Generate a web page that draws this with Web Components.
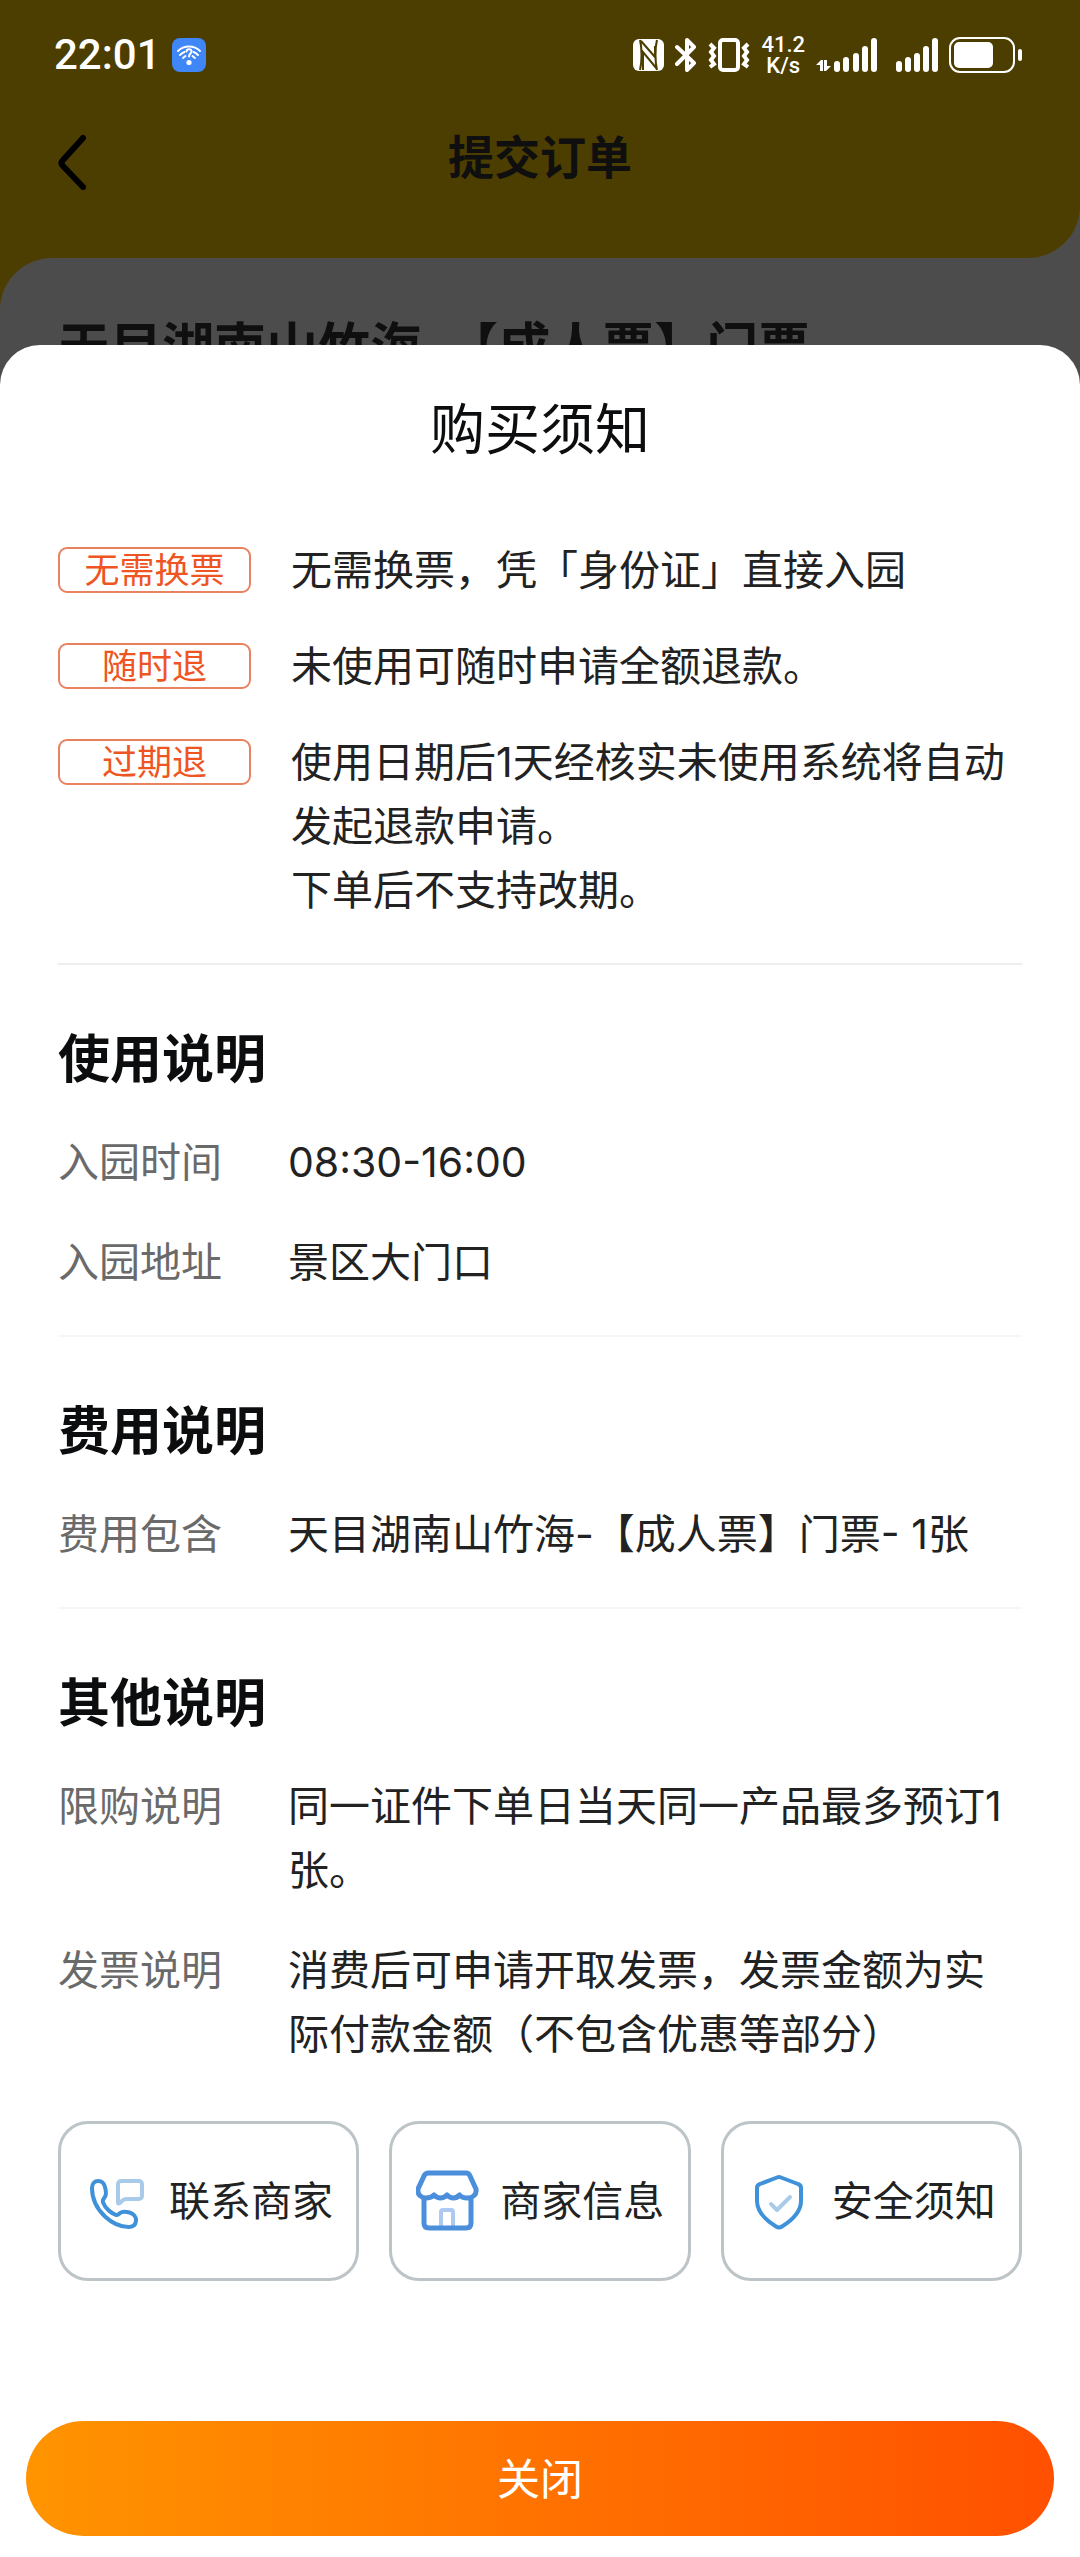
<!DOCTYPE html>
<html lang="zh-CN">
<head>
<meta charset="UTF-8">
<meta name="viewport" content="width=device-width, initial-scale=1">
<title>提交订单</title>
<style>
    html {
        --brand: #ffcc00;
        --ink: #222;
        --heading: #0b0d0e;
        --muted: #6a6a6a;
        --accent: #ee5522;
        --side: 58px;
    }

    body {
        margin: 0;
        font-family: Inter, "Noto Sans CJK SC", sans-serif;
        font-size: 41px;
        line-height: 64px;
        color: var(--ink);
        text-spacing-trim: space-all;
    }
</style>
</head>
<body>
<app-screen>
    <order-page slot="page" heading="提交订单">天目湖南山竹海-【成人票】门票</order-page>
    <status-bar slot="status" time="22:01" speed="41.2" unit="K/s"></status-bar>

    <bottom-sheet heading="购买须知">
        <notice-list>
            <notice-row tag="无需换票">无需换票，凭「身份证」直接入园</notice-row>
            <notice-row tag="随时退">未使用可随时申请全额退款。</notice-row>
            <notice-row tag="过期退">使用日期后1天经核实未使用系统将自动发起退款申请。<br>下单后不支持改期。</notice-row>
        </notice-list>

        <info-section heading="使用说明">
            <info-row label="入园时间">08:30-16:00</info-row>
            <info-row label="入园地址">景区大门口</info-row>
        </info-section>

        <info-section heading="费用说明">
            <info-row label="费用包含">天目湖南山竹海-【成人票】门票- 1张</info-row>
        </info-section>

        <info-section heading="其他说明">
            <info-row label="限购说明">同一证件下单日当天同一产品最多预订1张。</info-row>
            <info-row label="发票说明">消费后可申请开取发票，发票金额为实际付款金额（不包含优惠等部分）</info-row>
        </info-section>

        <action-group>
            <action-button icon="phone">联系商家</action-button>
            <action-button icon="store">商家信息</action-button>
            <action-button icon="shield">安全须知</action-button>
        </action-group>

        <close-button slot="footer">关闭</close-button>
    </bottom-sheet>
</app-screen>

<script>
class AppScreen extends HTMLElement {
    constructor() {
        super();
        this.attachShadow({ mode: "open" });

        this.shadowRoot.innerHTML = `
            <style>
                :host {
                    display: grid;
                    grid-template-rows: 345px 1fr;
                    position: relative;
                    min-height: 100vh;
                }

                .page, .scrim {
                    position: absolute;
                    inset: 0;
                    overflow: hidden;
                }

                .scrim {
                    background: rgba(0, 0, 0, 0.7);
                }

                .status, .sheet {
                    position: relative;
                    display: grid;
                    align-items: start;
                }

                .sheet {
                    align-items: stretch;
                }
            </style>

            <div class="page"><slot name="page"></slot></div>
            <div class="scrim"></div>
            <div class="status"><slot name="status"></slot></div>
            <div class="sheet"><slot></slot></div>
        `;
    }
}

class StatusBar extends HTMLElement {
    constructor() {
        super();
        this.attachShadow({ mode: "open" });

        this.shadowRoot.innerHTML = `
            <style>
                :host {
                    display: flex;
                    align-items: center;
                    justify-content: space-between;
                    height: 110px;
                    padding: 0 58px 0 54px;
                    color: #fff;
                    font-family: Roboto, sans-serif;
                }

                .group {
                    display: flex;
                    align-items: center;
                    gap: 11px;
                }

                .time {
                    font-size: 42px;
                    font-weight: 500;
                }

                .net {
                    font-size: 22px;
                    line-height: 21px;
                    font-weight: 500;
                    text-align: center;
                }

                .net span {
                    display: block;
                }

                svg {
                    display: block;
                    flex: none;
                }
            </style>

            <div class="group">
                <span class="time"></span>
                <svg width="34" height="34" viewBox="0 0 34 34" fill="none" stroke="#fff" stroke-width="2" stroke-linecap="round">
                    <rect width="34" height="34" rx="8" fill="#3f86f7" stroke="none"/>
                    <path d="M6 13C12 7 22 7 28 13"/>
                    <path d="M8 17C9.500 15.500 11 14.500 12.500 14M26 17C24.500 15.500 23 14.500 21.500 14M11 20L13.500 18M23 20L20.500 18"/>
                    <path d="M14.500 13.500C14.500 10.500 19.500 10.500 19.500 13.500C19.500 15.500 17 15.500 17 18.500"/>
                    <circle cx="17" cy="24.500" r="2.600" fill="#fff" stroke="none"/>
                </svg>
            </div>

            <div class="group">
                <svg width="31" height="32" viewBox="0 0 31 32" fill="none">
                    <rect width="31" height="32" rx="6" fill="#fff"/>
                    <path d="M7 1C9 9 9 23 7 31M8 2L22 18V7M24 31C22 23 22 9 24 1M10 31V13L24 30" stroke="#4c3d00" stroke-width="2"/>
                </svg>
                <svg width="22" height="34" viewBox="0 0 22 34" fill="none" stroke="#fff" stroke-width="4" stroke-linejoin="round" stroke-linecap="round">
                    <path d="M2 9L19 25L12 32V2L19 9L2 26"/>
                </svg>
                <svg width="42" height="34" viewBox="0 0 42 34" fill="none" stroke="#fff" stroke-width="4">
                    <rect x="12" y="2" width="18" height="30" rx="3"/>
                    <path d="M2 6L6 10L3 14L6 18L3 22L6 26L2 29M40 6L36 10L39 14L36 18L39 22L36 26L40 29"/>
                </svg>
                <div class="net"><span class="speed"></span><span class="unit"></span></div>
                <svg width="122" height="34" viewBox="0 0 122 34" fill="#fff">
                    <path d="M0 27L5 22H7V33H4V27ZM8 22H11V28H15L10 33H8Z"/>
                    <rect x="18" y="23" width="6" height="11" rx="3"/>
                    <rect x="27" y="19" width="6" height="15" rx="3"/>
                    <rect x="37" y="15" width="6" height="19" rx="3"/>
                    <rect x="46" y="8" width="6" height="26" rx="3"/>
                    <rect x="55" y="0" width="6" height="34" rx="3"/>
                    <rect x="80" y="23" width="6" height="11" rx="3"/>
                    <rect x="89" y="19" width="6" height="15" rx="3"/>
                    <rect x="98" y="15" width="6" height="19" rx="3"/>
                    <rect x="107" y="8" width="6" height="26" rx="3"/>
                    <rect x="116" y="0" width="6" height="34" rx="3"/>
                </svg>
                <svg width="73" height="36" viewBox="0 0 73 36" fill="#fff">
                    <rect x="1" y="1" width="64" height="34" rx="10" fill="none" stroke="#fff" stroke-width="2"/>
                    <rect x="5" y="5" width="39" height="26" rx="5"/>
                    <rect x="69" y="12" width="4" height="12" rx="2"/>
                </svg>
            </div>
        `;
    }

    connectedCallback() {
        this.shadowRoot.querySelector(".time").textContent = this.getAttribute("time");
        this.shadowRoot.querySelector(".speed").textContent = this.getAttribute("speed");
        this.shadowRoot.querySelector(".unit").textContent = this.getAttribute("unit");
    }
}

class OrderPage extends HTMLElement {
    constructor() {
        super();
        this.attachShadow({ mode: "open" });

        this.shadowRoot.innerHTML = `
            <style>
                :host {
                    display: block;
                    min-height: 100%;
                    background: #fff;
                    color: #333;
                }

                header {
                    display: grid;
                    grid-template-columns: 1fr auto 1fr;
                    align-items: center;
                    padding: 112px var(--side) 56px;
                    background: var(--brand);
                    border-bottom-right-radius: 52px;
                }

                button {
                    justify-self: start;
                    padding: 0;
                    border: 0;
                    background: none;
                    color: #000;
                }

                svg {
                    display: block;
                }

                h1 {
                    margin: 0;
                    font-size: 46px;
                    line-height: 90px;
                }

                /* keeps the brand colour visible behind the card's rounded corner */
                .wrap {
                    background: linear-gradient(to right, var(--brand) 52px, #fff 52px);
                }

                .card {
                    padding: 58px var(--side);
                    background: #fff;
                    border-top-left-radius: 52px;
                }

                h2 {
                    margin: 0;
                    font-size: 52px;
                    line-height: 64px;
                }
            </style>

            <header>
                <button type="button" aria-label="返回">
                    <svg width="28" height="66" viewBox="0 0 28 66" fill="none" stroke="currentColor" stroke-width="6" stroke-linecap="round" stroke-linejoin="round">
                        <path d="M25 14L5 36Q2 39 5 42L25 63"/>
                    </svg>
                </button>
                <h1></h1>
            </header>
            <div class="wrap">
                <div class="card"><h2><slot></slot></h2></div>
            </div>
        `;
    }

    connectedCallback() {
        this.shadowRoot.querySelector("h1").textContent = this.getAttribute("heading");
    }
}

class BottomSheet extends HTMLElement {
    constructor() {
        super();
        this.attachShadow({ mode: "open" });

        this.shadowRoot.innerHTML = `
            <style>
                :host {
                    display: flex;
                    flex-direction: column;
                    background: #fff;
                    border-radius: 40px 40px 0 0;
                }

                h2 {
                    margin: 0;
                    padding: 52px 0 77px;
                    font-size: 55px;
                    font-weight: 400;
                    line-height: 64px;
                    text-align: center;
                    color: var(--heading);
                }

                .body {
                    padding: 0 var(--side);
                }

                .footer {
                    margin-top: auto;
                    padding: 40px 26px 21px;
                }
            </style>

            <h2></h2>
            <div class="body"><slot></slot></div>
            <div class="footer"><slot name="footer"></slot></div>
        `;
    }

    connectedCallback() {
        this.shadowRoot.querySelector("h2").textContent = this.getAttribute("heading");
    }
}

class NoticeList extends HTMLElement {
    constructor() {
        super();
        this.attachShadow({ mode: "open" });

        this.shadowRoot.innerHTML = `
            <style>
                :host {
                    display: grid;
                    gap: 32px;
                    padding-bottom: 41px;
                    border-bottom: 2px solid #eee;
                }
            </style>

            <slot></slot>
        `;
    }
}

class NoticeRow extends HTMLElement {
    constructor() {
        super();
        this.attachShadow({ mode: "open" });

        this.shadowRoot.innerHTML = `
            <style>
                :host {
                    display: grid;
                    grid-template-columns: 193px 1fr;
                    gap: 40px;
                    align-items: start;
                }

                .tag {
                    box-sizing: border-box;
                    margin-top: 9px;
                    border: 2px solid #e8825f;
                    border-radius: 9px;
                    font-size: 35px;
                    line-height: 42px;
                    text-align: center;
                    color: var(--accent);
                }
            </style>

            <span class="tag"></span>
            <div><slot></slot></div>
        `;
    }

    connectedCallback() {
        this.shadowRoot.querySelector(".tag").textContent = this.getAttribute("tag");
    }
}

class InfoSection extends HTMLElement {
    constructor() {
        super();
        this.attachShadow({ mode: "open" });

        this.shadowRoot.innerHTML = `
            <style>
                :host {
                    display: block;
                    padding: 63px 0 41px;
                    border-bottom: 2px solid #f6f6f6;
                }

                :host(:last-of-type) {
                    border-bottom: 0;
                }

                h3 {
                    margin: 0 0 38px;
                    font-size: 52px;
                    line-height: 64px;
                    color: var(--heading);
                }

                .rows {
                    display: grid;
                    gap: 36px;
                }
            </style>

            <h3></h3>
            <div class="rows"><slot></slot></div>
        `;
    }

    connectedCallback() {
        this.shadowRoot.querySelector("h3").textContent = this.getAttribute("heading");
    }
}

class InfoRow extends HTMLElement {
    constructor() {
        super();
        this.attachShadow({ mode: "open" });

        this.shadowRoot.innerHTML = `
            <style>
                :host {
                    display: grid;
                    grid-template-columns: 190px 1fr;
                    gap: 40px;
                }

                .label {
                    color: var(--muted);
                }
            </style>

            <span class="label"></span>
            <div><slot></slot></div>
        `;
    }

    connectedCallback() {
        this.shadowRoot.querySelector(".label").textContent = this.getAttribute("label");
    }
}

class ActionGroup extends HTMLElement {
    constructor() {
        super();
        this.attachShadow({ mode: "open" });

        this.shadowRoot.innerHTML = `
            <style>
                :host {
                    display: grid;
                    grid-template-columns: repeat(3, 1fr);
                    gap: 30px;
                    margin-top: 14px;
                }
            </style>

            <slot></slot>
        `;
    }
}

const ICONS = {
    phone: `
        <g stroke-width="4">
            <path stroke="#3f92d9" d="M13.300 12C9.500 12 7 14.500 7 19C7 29 11.500 39.500 20 47.500C28 55 37 58 43.500 58C48 58 50.500 56 51 52C51.500 48 48.500 44.500 44.500 43.500C40.500 42.500 37 42.500 35 44C33.500 45.500 33 46.500 31 46C27 44.500 20.500 40 18 33.500C17 31 18.500 30 19.500 28.500C21.500 26 21 21.500 20 18C19 14 17 12 13.300 12Z"/>
            <path stroke="#a9cbea" d="M33 15A3 3 0 0 1 36 12H54A3 3 0 0 1 57 15V27A3 3 0 0 1 54 30H42Q38 30 36 33Q33 36 33 33Z"/>
        </g>`,
    store: `
        <path stroke="#adc8f1" stroke-width="4" d="M25 59V43Q25 41 27 41H35Q37 41 37 43V59"/>
        <g stroke="#4b8edb" stroke-width="5">
            <path d="M13 4H50Q53 4 54 7L60 20C61 26 56 29 52 29C48 29 45 28 43.500 26C40 30 35 30 31 26C27 30 22 30 18 26C16 28 13 29 10 29C6 29 1 26 2 20L8 7Q9 4 13 4Z"/>
            <path d="M8 31V54Q8 59 13 59H50Q55 59 55 54V31"/>
        </g>`,
    shield: `
        <path stroke="#3f92d9" stroke-width="4" d="M29 8.500Q31 7.500 33 8.500L50 15Q53 16 53 19V32C53 42 46 50 34 57.500Q31 59.500 28 57.500C16 50 9 42 9 32V19Q9 16 12 15Z"/>
        <path stroke="#a9cbea" stroke-width="4" d="M23 35L29 41L42 28"/>`
};

class ActionButton extends HTMLElement {
    constructor() {
        super();
        this.attachShadow({ mode: "open" });

        this.shadowRoot.innerHTML = `
            <style>
                :host {
                    display: block;
                }

                button {
                    display: flex;
                    align-items: center;
                    gap: 20px;
                    width: 100%;
                    height: 160px;
                    padding: 0 0 0 24px;
                    border: 3px solid #bcc4c7;
                    border-radius: 30px;
                    background: #fff;
                    font: inherit;
                    color: inherit;
                    white-space: nowrap;
                }

                svg {
                    flex: none;
                }
            </style>

            <button type="button">
                <svg width="64" height="64" viewBox="0 0 64 64" fill="none" stroke-linecap="round" stroke-linejoin="round" aria-hidden="true"></svg>
                <span><slot></slot></span>
            </button>
        `;
    }

    connectedCallback() {
        this.shadowRoot.querySelector("svg").innerHTML = ICONS[this.getAttribute("icon")] || "";
    }
}

class CloseButton extends HTMLElement {
    constructor() {
        super();
        this.attachShadow({ mode: "open" });

        this.shadowRoot.innerHTML = `
            <style>
                :host {
                    display: block;
                }

                button {
                    display: block;
                    width: 100%;
                    height: 115px;
                    padding: 0;
                    border: 0;
                    border-radius: 58px;
                    background: linear-gradient(to right, #ff9400, #ff5000);
                    font: inherit;
                    font-size: 43px;
                    color: #fff;
                }
            </style>

            <button type="button"><slot></slot></button>
        `;
    }
}

customElements.define("app-screen", AppScreen);
customElements.define("status-bar", StatusBar);
customElements.define("order-page", OrderPage);
customElements.define("bottom-sheet", BottomSheet);
customElements.define("notice-list", NoticeList);
customElements.define("notice-row", NoticeRow);
customElements.define("info-section", InfoSection);
customElements.define("info-row", InfoRow);
customElements.define("action-group", ActionGroup);
customElements.define("action-button", ActionButton);
customElements.define("close-button", CloseButton);
</script>
</body>
</html>
